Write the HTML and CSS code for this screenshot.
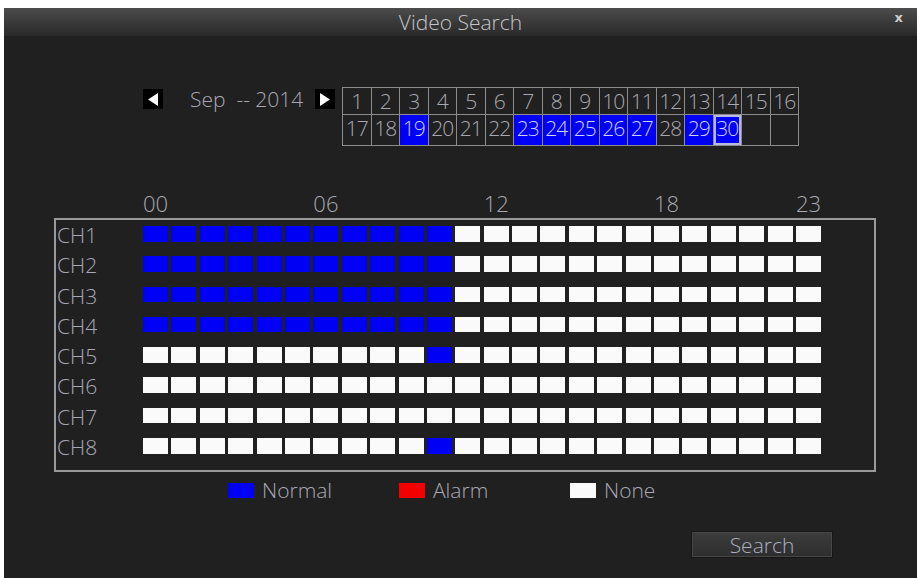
FILE: index.html
```html
<!DOCTYPE html>
<html>
<head>
<meta charset="utf-8">
<title>Video Search</title>
<link rel="stylesheet" href="styles.css">
</head>
<body>
<div class="window">
  <div class="titlebar">
    <span class="title">Video Search</span>
    <span class="close">x</span>
  </div>

  <div class="cal-row">
    <button class="arrow"><svg viewBox="0 0 20 20" width="20" height="20"><path d="M5 10.5 L15 4 L15 17 Z" fill="#fff"/></svg></button>
    <div class="month">Sep&nbsp; -- 2014</div>
    <button class="arrow"><svg viewBox="0 0 20 20" width="20" height="20"><path d="M15 10.5 L5 4 L5 17 Z" fill="#fff"/></svg></button>
    <div class="cal">
      <div class="d">1</div><div class="d">2</div><div class="d">3</div><div class="d">4</div>
      <div class="d">5</div><div class="d">6</div><div class="d">7</div><div class="d">8</div>
      <div class="d">9</div><div class="d">10</div><div class="d">11</div><div class="d">12</div>
      <div class="d">13</div><div class="d">14</div><div class="d">15</div><div class="d">16</div>
      <div class="d">17</div><div class="d">18</div><div class="d rec">19</div><div class="d">20</div>
      <div class="d">21</div><div class="d">22</div><div class="d rec">23</div><div class="d rec">24</div>
      <div class="d rec">25</div><div class="d rec">26</div><div class="d rec">27</div><div class="d">28</div>
      <div class="d rec">29</div><div class="d rec sel">30</div><div class="d"></div><div class="d"></div>
    </div>
  </div>

  <div class="hours">
    <span class="h00">00</span><span class="h06">06</span><span class="h12">12</span><span class="h18">18</span><span class="h23">23</span>
  </div>

  <div class="chbox">
    <div class="row"><span class="ch">CH1</span><div class="blocks"><i class="n"></i><i class="n"></i><i class="n"></i><i class="n"></i><i class="n"></i><i class="n"></i><i class="n"></i><i class="n"></i><i class="n"></i><i class="n"></i><i class="n"></i><i></i><i></i><i></i><i></i><i></i><i></i><i></i><i></i><i></i><i></i><i></i><i></i><i></i></div></div>
    <div class="row"><span class="ch">CH2</span><div class="blocks"><i class="n"></i><i class="n"></i><i class="n"></i><i class="n"></i><i class="n"></i><i class="n"></i><i class="n"></i><i class="n"></i><i class="n"></i><i class="n"></i><i class="n"></i><i></i><i></i><i></i><i></i><i></i><i></i><i></i><i></i><i></i><i></i><i></i><i></i><i></i></div></div>
    <div class="row"><span class="ch">CH3</span><div class="blocks"><i class="n"></i><i class="n"></i><i class="n"></i><i class="n"></i><i class="n"></i><i class="n"></i><i class="n"></i><i class="n"></i><i class="n"></i><i class="n"></i><i class="n"></i><i></i><i></i><i></i><i></i><i></i><i></i><i></i><i></i><i></i><i></i><i></i><i></i><i></i></div></div>
    <div class="row"><span class="ch">CH4</span><div class="blocks"><i class="n"></i><i class="n"></i><i class="n"></i><i class="n"></i><i class="n"></i><i class="n"></i><i class="n"></i><i class="n"></i><i class="n"></i><i class="n"></i><i class="n"></i><i></i><i></i><i></i><i></i><i></i><i></i><i></i><i></i><i></i><i></i><i></i><i></i><i></i></div></div>
    <div class="row"><span class="ch">CH5</span><div class="blocks"><i></i><i></i><i></i><i></i><i></i><i></i><i></i><i></i><i></i><i></i><i class="n"></i><i></i><i></i><i></i><i></i><i></i><i></i><i></i><i></i><i></i><i></i><i></i><i></i><i></i></div></div>
    <div class="row"><span class="ch">CH6</span><div class="blocks"><i></i><i></i><i></i><i></i><i></i><i></i><i></i><i></i><i></i><i></i><i></i><i></i><i></i><i></i><i></i><i></i><i></i><i></i><i></i><i></i><i></i><i></i><i></i><i></i></div></div>
    <div class="row"><span class="ch">CH7</span><div class="blocks"><i></i><i></i><i></i><i></i><i></i><i></i><i></i><i></i><i></i><i></i><i></i><i></i><i></i><i></i><i></i><i></i><i></i><i></i><i></i><i></i><i></i><i></i><i></i><i></i></div></div>
    <div class="row"><span class="ch">CH8</span><div class="blocks"><i></i><i></i><i></i><i></i><i></i><i></i><i></i><i></i><i></i><i></i><i class="n"></i><i></i><i></i><i></i><i></i><i></i><i></i><i></i><i></i><i></i><i></i><i></i><i></i><i></i></div></div>
  </div>

  <div class="legend">
    <div class="item"><span class="sw normal"></span>Normal</div>
    <div class="item"><span class="sw alarm"></span>Alarm</div>
    <div class="item"><span class="sw none"></span>None</div>
  </div>

  <div class="actions">
    <button class="search">Search</button>
  </div>
</div>
</body>
</html>
```

FILE: styles.css
```css
* { box-sizing: border-box; }
html, body { margin: 0; padding: 0; background: #fff; }
body {
  font-family: "Open Sans", "Liberation Sans", sans-serif;
  font-stretch: 100%;
  font-weight: 300;
  overflow: hidden;
}
.window {
  margin: 8px 0 0 4px;
  width: 913px;
  height: 570px;
  background: #202020;
  color: #b4b4bc;
  display: flex;
  flex-direction: column;
}
.titlebar {
  position: relative;
  height: 28px;
  background: linear-gradient(#4c4c4c, #383838 55%, #2a2a2a);
  display: flex;
  align-items: center;
  justify-content: center;
}
.title { font-size: 21px; font-stretch: 94%; color: #c4c4c8; line-height: 28px; }
.close {
  position: absolute;
  right: 14px;
  top: 2px;
  font-size: 13px;
  font-weight: 700;
  color: #cfcfcf;
  font-family: "DejaVu Sans", sans-serif;
}

/* calendar */
.cal-row {
  display: flex;
  align-items: flex-start;
  margin: 51px 0 0 139px;
}
.arrow {
  width: 20px;
  height: 20px;
  margin-top: 2px;
  padding: 0;
  border: 0;
  background: #000;
  display: block;
  flex: none;
}
.arrow svg { display: block; }
.month {
  width: 152px;
  flex: none;
  padding-left: 27px;
  font-size: 21px;
  font-stretch: 90%;
  line-height: 24px;
  color: #a8a8b4;
  white-space: nowrap;
}
.cal {
  margin-left: 7px;
  display: grid;
  grid-template-columns: repeat(16, 28.5px);
  grid-template-rows: 27px 31px;
  border-top: 1px solid #8c8c8c;
  border-left: 1px solid #8c8c8c;
}
.d {
  border-right: 1px solid #8c8c8c;
  border-bottom: 1px solid #8c8c8c;
  font-size: 21px;
  font-stretch: 90%;
  line-height: 27px;
  text-align: center;
  color: #a8a8b0;
  letter-spacing: -1px;
}
.d.rec { background: #0000f4; color: #d0d0ff; }
.d.sel { box-shadow: inset 0 0 0 2px #b8b8e0; }

/* hours */
.hours {
  margin: 46px 0 0 139px;
  display: grid;
  grid-template-columns: repeat(24, 25px);
  column-gap: 3.4px;
  font-size: 22px;
  line-height: 22px;
  color: #a8a8b0;
  white-space: nowrap;
}
.h00 { grid-column: 1; }
.h06 { grid-column: 7; }
.h12 { grid-column: 13; }
.h18 { grid-column: 19; }
.h23 { grid-column: 24; }

/* channel box */
.chbox {
  margin: 4px 0 0 50px;
  width: 822px;
  border: 2px solid #9a9a9a;
  padding-bottom: 8px;
}
.row {
  display: flex;
  height: 30.3px;
}
.ch {
  width: 87px;
  flex: none;
  padding-left: 1px;
  font-size: 21px;
  line-height: 30px;
  color: #a8a8b4;
}
.blocks {
  display: grid;
  grid-template-columns: repeat(24, 25px);
  column-gap: 3.4px;
  margin-top: 6px;
  height: 15.5px;
}
.blocks i { display: block; background: #fafafa; }
.blocks i.n { background: #0000f4; }

/* legend */
.legend {
  margin: 11px 0 0 224px;
  display: flex;
  height: 15px;
}
.item {
  width: 171px;
  display: flex;
  align-items: center;
  font-size: 21px;
  font-stretch: 94%;
  line-height: 15px;
  color: #a8a8b4;
}
.sw { width: 26px; height: 15px; margin-right: 8px; }
.sw.normal { background: #0000f4; }
.sw.alarm { background: #f40000; }
.sw.none { background: #fafafa; }

/* actions */
.actions {
  margin: 34px 0 0 688px;
}
.search {
  width: 140px;
  height: 25px;
  padding: 0;
  border: 1px solid #474747;
  box-shadow: 0 0 0 1px #161616;
  background: linear-gradient(#3c3c3c, #2e2e2e);
  font-family: inherit;
  font-stretch: 95%;
  font-weight: 300;
  font-size: 21px;
  line-height: 22px;
  color: #aab0c0;
}
```
